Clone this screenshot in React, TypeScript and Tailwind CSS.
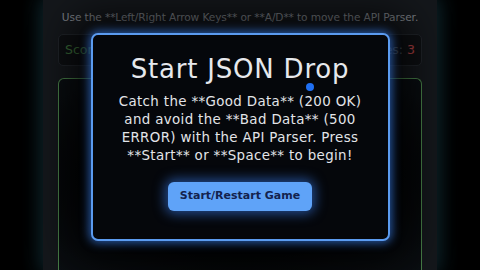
export default function App() {
  return (
    <div
      className="relative h-[270px] w-[480px] overflow-hidden bg-black"
      style={{ fontFamily: '"DejaVu Sans", "Liberation Sans", sans-serif' }}
    >
      {/* Game container */}
      <div className="mx-auto flex h-full w-[394px] flex-col bg-[#1b1f25] px-[15px] shadow-[0_0_18px_4px_rgba(45,110,130,0.45)]">
        <p className="mt-[10px] whitespace-nowrap text-center text-[10.6px] tracking-[-0.1px] text-[#a3a9b1]">
          Use the **Left/Right Arrow Keys** or **A/D** to move the API Parser.
        </p>

        {/* Score bar */}
        <div className="mt-[8px] flex h-[32px] items-center justify-between rounded-[5px] border border-[#2a2f36] bg-[#121519] px-[6px] text-[12.5px]">
          <span className="text-[#4f8f4c]">Score: 0</span>
          <span className="text-[#5a6069]">
            Lives: <span className="text-[#e0555a]">3</span>
          </span>
        </div>

        {/* Play area */}
        <div className="mt-[12px] flex-1 rounded-t-[6px] border border-b-0 border-[#5fa85f] bg-[radial-gradient(ellipse_at_center,#000000_40%,#0e1318_100%)]" />
      </div>

      {/* Overlay */}
      <div className="absolute inset-0 flex justify-center bg-black/25 pt-[33px]">
        <div className="flex h-[208px] w-[299px] flex-col items-center rounded-[7px] border-2 border-[#5b9bf0] bg-[#05070b] shadow-[0_0_10px_2px_rgba(59,130,246,0.65),0_0_40px_18px_rgba(0,0,0,0.75)]">
          <h1 className="mt-[18px] whitespace-nowrap text-[26px] leading-[32px] tracking-[0.8px] text-[#e6e8ec]">
            Start JSON Drop
          </h1>
          <p className="mt-[8px] whitespace-nowrap text-center text-[13.4px] leading-[18px] tracking-[0.35px] text-[#e2e4e8]">
            Catch the **Good Data** (200 OK)
            <br />
            and avoid the **Bad Data** (500
            <br />
            ERROR) with the API Parser. Press
            <br />
            **Start** or **Space** to begin!
          </p>
          <button className="mt-[17px] h-[29px] w-[144px] rounded-[6px] bg-[#5fa3f8] text-[11px] font-semibold text-[#13224d] shadow-[0_0_12px_3px_rgba(59,130,246,0.55)]">
            Start/Restart Game
          </button>
        </div>
      </div>

      {/* Falling data packet */}
      <div className="absolute left-[306px] top-[83px] h-[8px] w-[8px] rounded-full bg-[#1f6ff2]" />
    </div>
  );
}
